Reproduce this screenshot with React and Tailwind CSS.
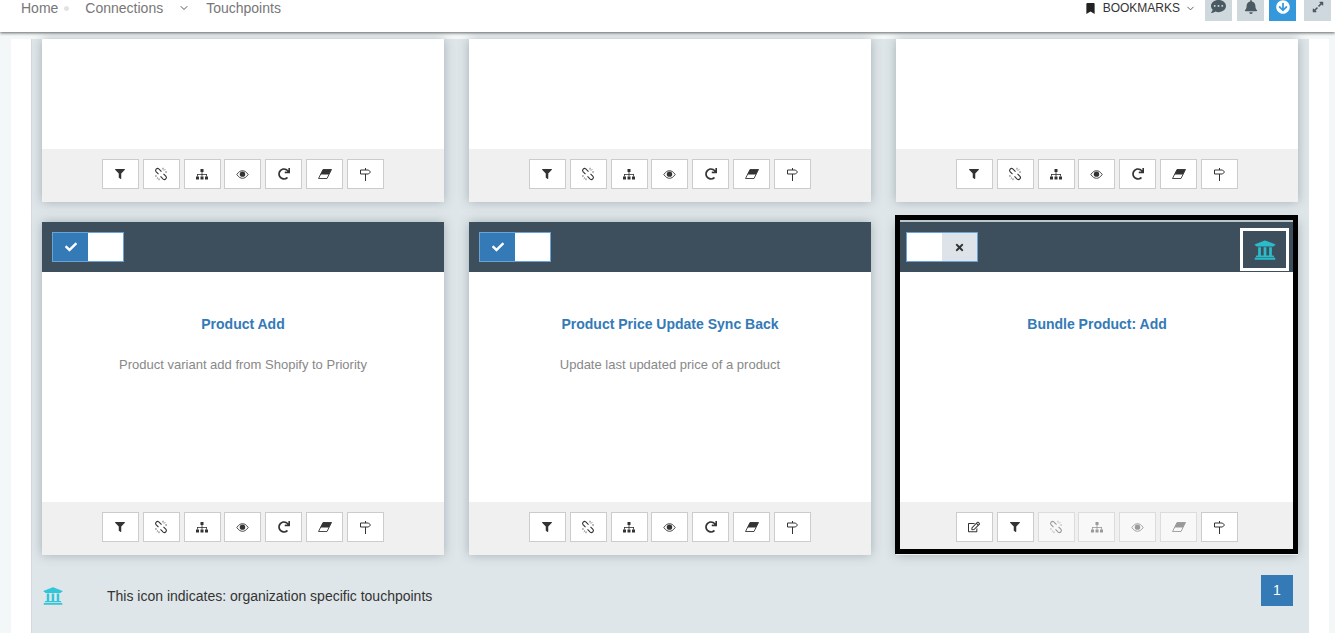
import {
  FaFilter, FaRedo, FaUniversity, FaCheck, FaTimes,
  FaBookmark, FaCommentDots, FaBell, FaArrowCircleDown, FaExpandAlt, FaRegEdit,
} from 'react-icons/fa';
import { ChevronDown } from 'lucide-react';

function UnlinkIcon() {
  return (
    <svg width="14" height="14" viewBox="0 0 14 14" fill="none" stroke="currentColor" strokeWidth="1.1">
      <path d="M4.5 7.2 2 4.7a2 2 0 0 1 2.8-2.8L7.5 4.6" />
      <path d="M9.5 6.8 12 9.3a2 2 0 0 1-2.8 2.8L6.5 9.4" />
      <path d="M9 .8v1.8M11.2 2.3 10 3.5M13 5h-1.8M5 13.2v-1.8M2.8 11.7 4 10.5M1 9h1.8" strokeWidth="0.7" />
    </svg>
  );
}

function EyeIcon() {
  return (
    <svg width="13" height="9" viewBox="0 0 14 10" fill="none" stroke="currentColor">
      <path d="M.7 5C3 1.6 5 .8 7 .8s4 .8 6.3 4.2C11 8.4 9 9.2 7 9.2S3 8.4.7 5Z" />
      <circle cx="7" cy="4.6" r="3" fill="currentColor" stroke="none" />
    </svg>
  );
}

function SitemapIcon() {
  return (
    <svg width="12" height="11" viewBox="0 0 12 11" fill="currentColor">
      <rect x="4.5" y="0" width="3" height="3" />
      <rect x="5.6" y="3" width="0.8" height="2" />
      <rect x="1.1" y="5" width="9.8" height="0.8" />
      <rect x="1.1" y="5" width="0.8" height="2.5" />
      <rect x="5.6" y="5" width="0.8" height="2.5" />
      <rect x="10.1" y="5" width="0.8" height="2.5" />
      <rect x="0" y="7.5" width="3" height="3" />
      <rect x="4.5" y="7.5" width="3" height="3" />
      <rect x="9" y="7.5" width="3" height="3" />
    </svg>
  );
}

function EraserIcon() {
  return (
    <svg width="14" height="10" viewBox="0 0 14 10" fill="none" stroke="currentColor" strokeWidth="0.9">
      <path d="M5 .5h8.5L9 9.5H.5Z" />
      <path d="M5 .5h8.5l-2.6 5H2.5Z" fill="currentColor" stroke="none" />
    </svg>
  );
}

function SignIcon() {
  return (
    <svg width="11" height="13" viewBox="0 0 11 13" fill="none" stroke="currentColor">
      <path d="M.5 2h8l2 2-2 2h-8Z" />
      <path d="M5.5 0v2M5.5 6v7" />
    </svg>
  );
}

const ICONS = {
  edit: <FaRegEdit size={12} />,
  filter: <FaFilter size={10} />,
  unlink: <UnlinkIcon />,
  sitemap: <SitemapIcon />,
  eye: <EyeIcon />,
  redo: <FaRedo size={12} />,
  eraser: <EraserIcon />,
  sign: <SignIcon />,
};

const ENABLED = ['filter', 'unlink', 'sitemap', 'eye', 'redo', 'eraser', 'sign'];

function ToolButton({ icon, disabled }) {
  return (
    <button
      className={`flex h-[30px] w-[37px] items-center justify-center border ${
        disabled ? 'border-[#dcdcdc] bg-[#f8f8f8] text-[#999]' : 'border-[#ccc] bg-white text-[#333]'
      }`}
    >
      {ICONS[icon]}
    </button>
  );
}

function Footer({ tools }) {
  return (
    <div className="flex h-[53px] justify-center gap-[3.83px] bg-[#f0f0f0] pr-[0.2px] pt-[10px]">
      {tools.map((t) => (
        <ToolButton key={t.icon} icon={t.icon} disabled={t.disabled} />
      ))}
    </div>
  );
}

const defaultTools = ENABLED.map((icon) => ({ icon }));

function Toggle({ on }) {
  return (
    <div className="mt-[10px] flex h-[30px] w-[72px] border border-[#6aa3d8] bg-white">
      {on ? (
        <>
          <div className="flex w-[35px] items-center justify-center bg-[#337ab7] text-white">
            <FaCheck size={12} />
          </div>
          <div className="flex-1 bg-white" />
        </>
      ) : (
        <>
          <div className="w-[35px] bg-white" />
          <div className="flex flex-1 items-center justify-center bg-[#dee3ea] text-[#333]">
            <FaTimes size={11} />
          </div>
        </>
      )}
    </div>
  );
}

function StubCard() {
  return (
    <div className="bg-white shadow-[0_0_10px_rgba(90,110,120,0.45)]">
      <div className="h-[110px]" />
      <Footer tools={defaultTools} />
    </div>
  );
}

function Card({ title, desc, on, org, tools = defaultTools }) {
  return (
    <div className="relative bg-white shadow-[0_0_10px_rgba(90,110,120,0.45)]">
      <div className="flex h-[50px] items-start justify-between bg-[#3d4e5c] pl-[10px] pr-[9px]">
        <Toggle on={on} />
        {org && (
          <div className="mt-[6px] flex h-[43px] w-[49px] items-center justify-center border-[3px] border-white text-[#2bbcca]">
            <FaUniversity size={22} />
          </div>
        )}
      </div>
      <div className="h-[230px] px-4 pt-[43px] text-center">
        <h3 className="text-[14px] font-bold leading-[18px] text-[#337ab7]">{title}</h3>
        <p className="mt-[23px] text-[13px] leading-[18px] text-[#888]">{desc}</p>
      </div>
      <Footer tools={tools} />
      {org && (
        <div className="pointer-events-none absolute -left-[1px] -top-[7px] bottom-[1px] right-0 border-[5px] border-black">
          <div className="h-[2px] bg-[#bcc7ca]" />
        </div>
      )}
    </div>
  );
}

function TopButton({ children, className }) {
  return <div className={`flex h-[21px] w-[27px] items-center justify-center pb-[8px] ${className}`}>{children}</div>;
}

export default function App() {
  return (
    <div className="flex h-[633px] w-[1335px] flex-col overflow-hidden bg-[#f3f7f8] font-['Liberation_Sans',sans-serif]">
      <header className="relative z-10 flex h-[32px] shrink-0 items-start justify-between bg-white pl-[21px] pr-[4px] shadow-[0_1px_3px_rgba(0,0,0,0.6)]">
        <nav className="flex h-[16px] items-center text-[14px] text-[#777]">
          <span>Home</span>
          <span className="ml-[6px] h-[5px] w-[5px] rounded-full bg-[#e3e3e3]" />
          <span className="ml-[16px]">Connections</span>
          <ChevronDown size={12} strokeWidth={2} className="ml-[15px] text-[#555]" />
          <span className="ml-[16px]">Touchpoints</span>
        </nav>
        <div className="flex items-start">
          <div className="flex h-[16px] items-center text-[12px] text-[#333]">
            <FaBookmark size={11} className="text-[#222]" />
            <span className="ml-[7px]">BOOKMARKS</span>
            <ChevronDown size={11} strokeWidth={2} className="ml-[5px] text-[#555]" />
          </div>
          <div className="ml-[9px] flex">
            <TopButton className="bg-[#cfd8dc] text-[#4a5a63]"><FaCommentDots size={15} /></TopButton>
            <TopButton className="ml-[5px] bg-[#cfd8dc] text-[#4a5a63]"><FaBell size={14} /></TopButton>
            <TopButton className="ml-[5px] bg-[#3498db] text-white"><FaArrowCircleDown size={14} /></TopButton>
            <TopButton className="ml-[8px] bg-[#cfd8dc] text-[#4a5a63]"><FaExpandAlt size={12} /></TopButton>
          </div>
        </div>
      </header>

      <div className="ml-[11px] mr-[6px] mt-[7px] flex-1 bg-white px-[20px]">
        <main className="h-full border-l border-[#d3d9dc] bg-[#dfe6e9] pl-[10px] pr-[11px]">
          <div className="grid grid-cols-3 gap-x-[25px] gap-y-[20px]">
            <StubCard />
            <StubCard />
            <StubCard />
            <Card title="Product Add" desc="Product variant add from Shopify to Priority" on />
            <Card title="Product Price Update Sync Back" desc="Update last updated price of a product" on />
            <Card
              title="Bundle Product: Add"
              org
              tools={[
                { icon: 'edit' },
                { icon: 'filter' },
                { icon: 'unlink', disabled: true },
                { icon: 'sitemap', disabled: true },
                { icon: 'eye', disabled: true },
                { icon: 'eraser', disabled: true },
                { icon: 'sign' },
              ]}
            />
          </div>
          <div className="mt-[20px] flex items-start justify-between">
            <div className="flex items-center pt-[10px] text-[14px] text-[#333]">
              <FaUniversity size={20} className="ml-[1px] text-[#33c5d8]" />
              <span className="ml-[44px] mt-[1px]">This icon indicates: organization specific touchpoints</span>
            </div>
            <div className="mr-[5px] flex h-[31px] w-[32px] items-center justify-center bg-[#337ab7] text-[14px] text-white">1</div>
          </div>
        </main>
      </div>
    </div>
  );
}
